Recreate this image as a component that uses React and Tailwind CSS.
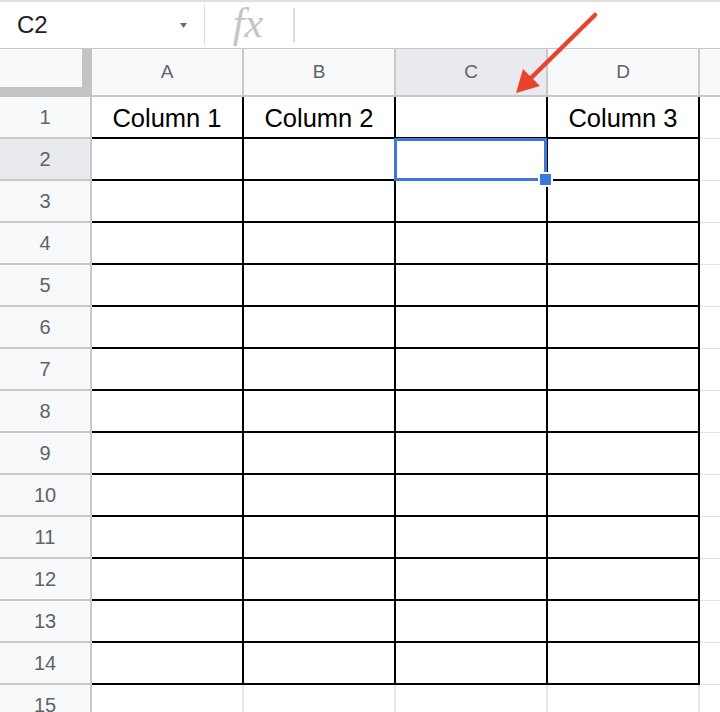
import React from "react";

const cols = ["A", "B", "C", "D"];
const row1 = ["Column 1", "Column 2", "", "Column 3"];

function Row({ n }) {
  const selected = n === 2;
  const inTable = n <= 14;
  return (
    <div className="flex h-[42px] shrink-0">
      <div
        className={`w-[92px] h-full shrink-0 flex items-center justify-center border-r-2 border-b-2 border-[#c8c8c8] text-[20px] text-[#5f6368] ${
          selected ? "bg-[#e8eaed]" : "bg-[#f8f9fa]"
        }`}
      >
        {n}
      </div>
      {cols.map((c, i) => (
        <div
          key={c}
          className={`w-[152px] h-full shrink-0 flex items-center justify-center pt-[3px] text-[25.5px] text-black ${
            inTable
              ? "border-r-2 border-b-2 border-black"
              : "border-r-2 border-b border-[#e6e6e6]"
          }`}
        >
          {n === 1 ? row1[i] : ""}
        </div>
      ))}
      <div className="flex-1 h-full border-b border-[#e2e3e3]" />
    </div>
  );
}

export default function App() {
  const rows = Array.from({ length: 15 }, (_, i) => i + 1);
  return (
    <div className="relative w-[720px] h-[712px] overflow-hidden bg-white font-['Liberation_Sans',Arial,sans-serif]">
      {/* formula bar */}
      <div className="flex h-[49px] border-t-2 border-b border-t-[#e0e0e0] border-b-[#c8c8c8] items-center">
        <div className="w-[204px] h-full flex items-center pl-[17px] pr-[17px]">
          <span className="text-[24px] text-[#202124] leading-none">C2</span>
          <svg className="ml-auto" width="7" height="5" viewBox="0 0 7 5">
            <path d="M0 0 L7 0 L3.5 5 Z" fill="#6b6b6b" />
          </svg>
        </div>
        <div className="w-px h-[40px] bg-[#dadce0]" />
        <div className="w-[88px] h-full flex items-center justify-center">
          <span className="font-['Liberation_Serif',serif] italic text-[42px] leading-none text-[#c4c4c4] -mt-[4px] -ml-[2px]">
            fx
          </span>
        </div>
        <div className="w-[2px] h-[34px] bg-[#dadce0]" />
        <div className="flex-1" />
      </div>

      {/* column header row */}
      <div className="flex h-[48px]">
        <div className="w-[92px] h-full shrink-0 bg-[#f8f9fa] border-r-[10px] border-b-[10px] border-[#c4c4c4]" />
        {cols.map((c) => (
          <div
            key={c}
            className={`w-[152px] h-full shrink-0 flex items-center justify-center pt-[1px] border-r-2 border-b-2 border-[#c8c8c8] text-[19px] text-[#5f6368] ${
              c === "C" ? "bg-[#e8eaed]" : "bg-[#f8f9fa]"
            }`}
          >
            {c}
          </div>
        ))}
        <div className="flex-1 h-full bg-[#f8f9fa] border-b-2 border-[#c8c8c8]" />
      </div>

      {/* rows */}
      {rows.map((n) => (
        <Row key={n} n={n} />
      ))}

      {/* selection box */}
      <div className="absolute left-[394px] top-[138px] w-[153px] h-[43px] border-[3px] border-[#3c78d8]" />
      <div className="absolute left-[538px] top-[172px] w-[15px] h-[15px] bg-[#3c78d8] border-2 border-white" />

      {/* red arrow */}
      <svg
        className="absolute left-0 top-0 pointer-events-none"
        width="720"
        height="712"
        viewBox="0 0 720 712"
      >
        <line
          x1="595"
          y1="15"
          x2="532"
          y2="77"
          stroke="#e9432f"
          strokeWidth="4.5"
          strokeLinecap="round"
        />
        <polygon points="516,93 523,69 540,86" fill="#e9432f" />
      </svg>
    </div>
  );
}
